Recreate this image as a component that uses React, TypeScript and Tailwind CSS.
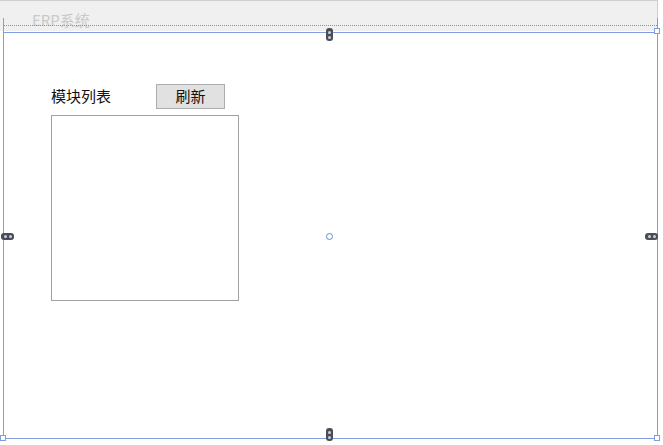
import React from "react";

const font = { fontFamily: '"Microsoft YaHei","Noto Sans CJK SC","Noto Sans",sans-serif' };

function VPill() {
  return (
    <div className="w-[7px] h-[13px] rounded-[3px] bg-[#4a4d55] flex flex-col items-center justify-center gap-[2px]">
      <div className="w-[3px] h-[3px] rounded-full bg-[#c8d0e0]" />
      <div className="w-[3px] h-[3px] rounded-full bg-[#c8d0e0]" />
    </div>
  );
}
function HPill() {
  return (
    <div className="w-[13px] h-[7px] rounded-[3px] bg-[#4a4d55] flex items-center justify-center gap-[2px]">
      <div className="w-[3px] h-[3px] rounded-full bg-[#c8d0e0]" />
      <div className="w-[3px] h-[3px] rounded-full bg-[#c8d0e0]" />
    </div>
  );
}

export default function App() {
  return (
    <div className="relative w-[663px] h-[445px] bg-white overflow-hidden" style={font}>
      {/* title strip */}
      <div className="h-[31px] bg-[#f0f0f0] border-t border-r border-[#cfcfcf] mr-[5px] flex items-end">
        <div className="pl-[32px] pb-[2px] text-[15px] leading-[18px] text-[#c9c9c9]">ERP系统</div>
      </div>
      {/* dotted line */}
      <div className="absolute left-[3px] right-[6px] top-[25px] border-t border-dotted border-[#6f95e0]" />
      {/* form frame */}
      <div className="ml-[3px] mr-[5px] mt-[1px] h-[407px] border border-[#7f9de0] pl-[47px] pt-[51px] bg-white">
        <div className="flex items-center h-[25px]">
          <div className="w-[105px] text-[15px] text-[#111]">模块列表</div>
          <div className="w-[69px] h-[25px] bg-[#e1e1e1] border border-[#adadad] flex items-center justify-center text-[15px] text-[#111]">
            刷新
          </div>
        </div>
        <div className="mt-[6px] w-[188px] h-[186px] border border-[#a0a0a0]" />
      </div>
      {/* guide lines above frame */}
      <div className="absolute left-[3px] top-[18px] h-[14px] border-l border-[#7f9de0]" />
      <div className="absolute left-[657px] top-[18px] h-[14px] border-l border-[#7f9de0]" />
      {/* corner squares */}
      <div className="absolute left-[654px] top-[28px] w-[6px] h-[6px] border border-[#7f9de0] bg-white" />
      <div className="absolute left-[0px] top-[435px] w-[6px] h-[6px] border border-[#7f9de0] bg-white" />
      <div className="absolute left-[654px] top-[435px] w-[6px] h-[6px] border border-[#7f9de0] bg-white" />
      {/* handles */}
      <div className="absolute left-[326px] top-[28px]"><VPill /></div>
      <div className="absolute left-[326px] top-[428px]"><VPill /></div>
      <div className="absolute left-[1px] top-[233px]"><HPill /></div>
      <div className="absolute left-[645px] top-[233px]"><HPill /></div>
      <div className="absolute left-[326px] top-[233px] w-[7px] h-[7px] rounded-full border border-[#6d8fd8] bg-white" />
    </div>
  );
}
